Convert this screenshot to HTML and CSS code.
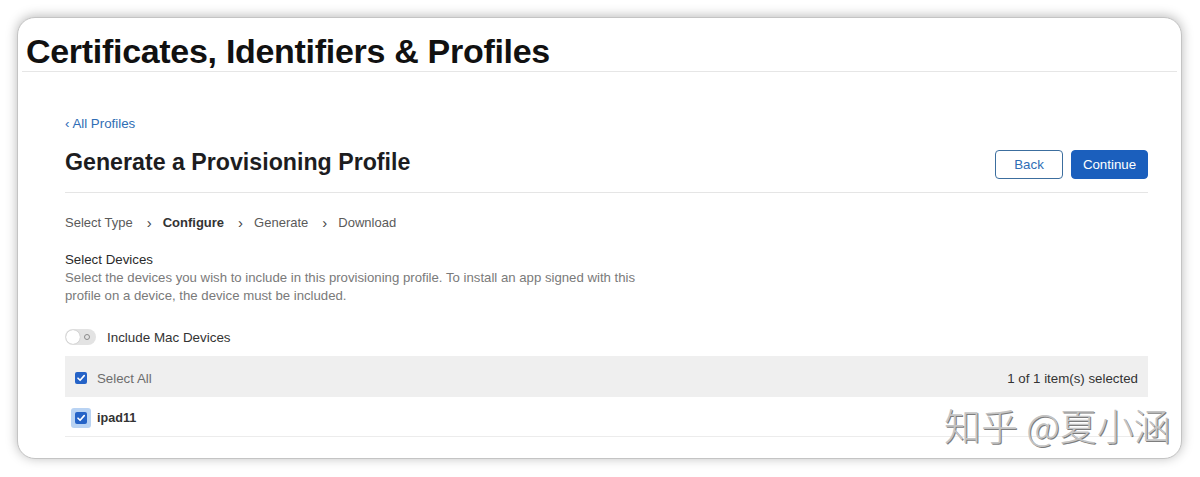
FILE: index.html
```html
<!DOCTYPE html>
<html>
<head>
<meta charset="utf-8">
<link rel="stylesheet" href="styles.css">
</head>
<body>
<div class="card">
  <header class="top">
    <h1 class="brand">Certificates, Identifiers &amp; Profiles</h1>
  </header>
  <main class="content">
    <a class="back-link" href="#">&lsaquo; All Profiles</a>
    <div class="title-row">
      <h2 class="page-title">Generate a Provisioning Profile</h2>
      <div class="actions">
        <button class="btn btn-secondary">Back</button>
        <button class="btn btn-primary">Continue</button>
      </div>
    </div>
    <nav class="steps">
      <span class="step">Select Type</span>
      <span class="sep">&rsaquo;</span>
      <span class="step current">Configure</span>
      <span class="sep">&rsaquo;</span>
      <span class="step">Generate</span>
      <span class="sep">&rsaquo;</span>
      <span class="step">Download</span>
    </nav>
    <section class="section">
      <div class="section-title">Select Devices</div>
      <p class="section-desc">Select the devices you wish to include in this provisioning profile. To install an app signed with this profile on a device, the device must be included.</p>
    </section>
    <div class="toggle-row">
      <span class="toggle"><span class="knob"></span><span class="off-mark"></span></span>
      <span class="toggle-label">Include Mac Devices</span>
    </div>
    <div class="table">
      <div class="thead">
        <label class="cell-check">
          <span class="checkbox"><svg viewBox="0 0 12 12" width="12" height="12"><path d="M3 6.2 L5.1 8.3 L9.2 3.6" fill="none" stroke="#fff" stroke-width="1.6" stroke-linecap="round" stroke-linejoin="round"/></svg></span>
          <span class="thead-label">Select All</span>
        </label>
        <span class="count">1 of 1 item(s) selected</span>
      </div>
      <div class="trow">
        <label class="cell-check">
          <span class="focus-ring"><span class="checkbox"><svg viewBox="0 0 12 12" width="12" height="12"><path d="M3 6.2 L5.1 8.3 L9.2 3.6" fill="none" stroke="#fff" stroke-width="1.6" stroke-linecap="round" stroke-linejoin="round"/></svg></span></span>
          <span class="device-name">ipad11</span>
        </label>
      </div>
    </div>
  </main>
  <div class="watermark">知乎 @夏小涵</div>
</div>
</body>
</html>
```

FILE: styles.css
```css
* { box-sizing: border-box; }
html, body { margin: 0; padding: 0; background: #ffffff; }
body {
  font-family: "Liberation Sans", Arial, sans-serif;
  color: #1d1d1f;
  height: 477px;
  overflow: hidden;
}
.card {
  position: relative;
  margin: 17px 18px 0 17px;
  height: 442px;
  background: #fff;
  border-radius: 18px;
  border: 1px solid #c4c4c4;
  box-shadow: 0 -1px 12px rgba(0,0,0,0.28);
  overflow: hidden;
}
.top {
  height: 54px;
  padding: 14px 0 0 4px;
  margin: 0 4px;
  border-bottom: 1px solid #e6e6e6;
}
.brand {
  margin: 0;
  font-size: 34px;
  line-height: 38px;
  font-weight: 700;
  letter-spacing: -0.3px;
  color: #111;
}
.content {
  padding: 43px 33px 0 47px;
}
.back-link {
  display: block;
  font-size: 13.3px;
  line-height: 18px;
  color: #2f6eb5;
  text-decoration: none;
}
.title-row {
  display: flex;
  justify-content: space-between;
  align-items: flex-start;
  margin-top: 15px;
  padding-bottom: 13px;
  border-bottom: 1px solid #e5e5e5;
}
.page-title {
  margin: 0;
  font-size: 23.2px;
  line-height: 28px;
  font-weight: 700;
  color: #1d1d1f;
}
.actions {
  display: flex;
  gap: 8px;
  margin-top: 2px;
}
.btn {
  height: 29px;
  font-family: "Liberation Sans", Arial, sans-serif;
  font-size: 13.3px;
  border-radius: 4px;
  padding: 0 10px;
}
.btn-secondary {
  width: 68px;
  background: #fff;
  color: #2f6eb5;
  border: 1px solid #3c6e9e;
}
.btn-primary {
  width: 77px;
  background: #1b5fbd;
  color: #fff;
  border: 1px solid #1b5fbd;
}
.steps {
  display: flex;
  align-items: center;
  margin-top: 21px;
  font-size: 13px;
  line-height: 18px;
  color: #5a5a5a;
}
.sep {
  margin: 0 11px 0 14px;
  font-size: 15px;
  color: #444;
}
.step.current {
  font-weight: 700;
  color: #333;
}
.section {
  margin-top: 19px;
}
.section-title {
  font-size: 13.3px;
  line-height: 18px;
  color: #2a2a2a;
}
.section-desc {
  margin: 0;
  max-width: 590px;
  font-size: 13.2px;
  line-height: 18px;
  color: #7a7a7a;
}
.toggle-row {
  display: flex;
  align-items: center;
  gap: 11px;
  margin-top: 23px;
  height: 18px;
}
.toggle {
  position: relative;
  width: 31px;
  height: 16px;
  border-radius: 8px;
  background: #e3e3e3;
  display: inline-block;
}
.knob {
  position: absolute;
  left: 1px;
  top: 1px;
  width: 14px;
  height: 14px;
  border-radius: 50%;
  background: #fff;
  box-shadow: 0 0 1px rgba(0,0,0,0.35);
}
.off-mark {
  position: absolute;
  right: 6px;
  top: 5px;
  width: 6px;
  height: 6px;
  border-radius: 50%;
  border: 1.2px solid #8a8a8a;
}
.toggle-label {
  font-size: 13.4px;
  color: #333;
}
.table {
  margin-top: 10px;
}
.thead {
  display: flex;
  justify-content: space-between;
  align-items: center;
  height: 41px;
  padding: 3px 10px 0;
  background: #efefef;
  font-size: 13.3px;
}
.cell-check {
  display: flex;
  align-items: center;
  gap: 10px;
}
.checkbox {
  display: inline-flex;
  width: 12px;
  height: 12px;
  border-radius: 2px;
  background: #2563c7;
}
.thead-label { color: #6d6d6d; }
.count { color: #333; font-size: 13.3px; }
.trow {
  display: flex;
  align-items: center;
  height: 40px;
  padding: 2px 6px 0;
  border-bottom: 1px solid #ececec;
}
.trow .cell-check { gap: 6px; }
.focus-ring {
  display: inline-flex;
  align-items: center;
  justify-content: center;
  width: 20px;
  height: 20px;
  border-radius: 3px;
  background: #b9d3f3;
}
.device-name {
  font-size: 12.6px;
  font-weight: 700;
  color: #333;
}
.watermark {
  position: absolute;
  left: 926px;
  top: 385px;
  font-family: "Noto Sans CJK SC", sans-serif;
  font-size: 37px;
  line-height: 44px;
  font-weight: 300;
  color: #c4c4c4;
  text-shadow: 1px 1px 0 #7d7d7d;
  white-space: nowrap;
}
```
